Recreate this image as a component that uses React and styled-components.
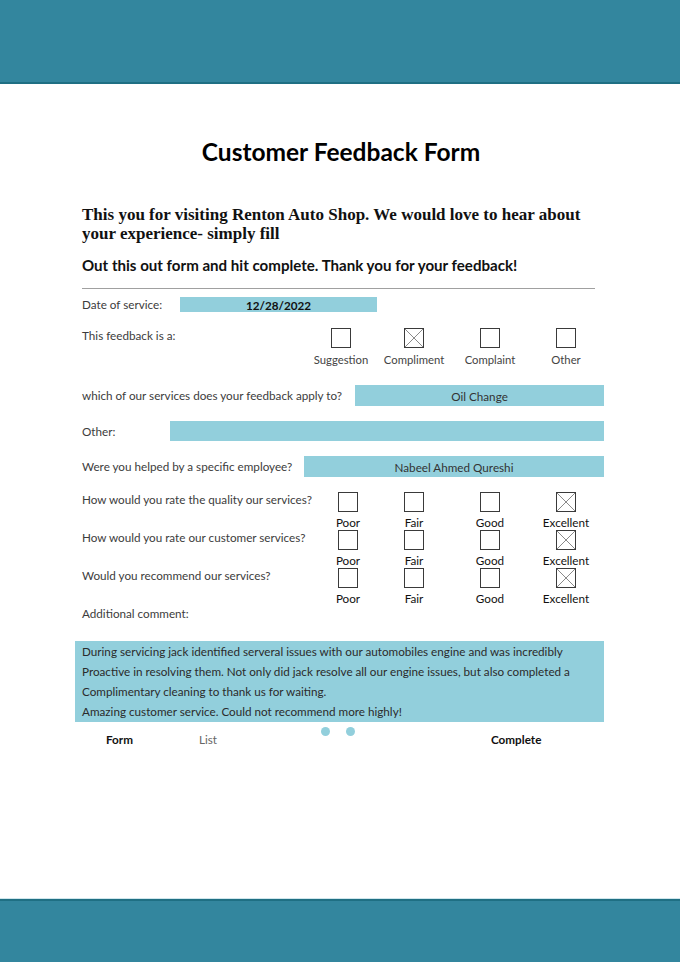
import React from "react";
import styled, { createGlobalStyle } from "styled-components";

const Global = createGlobalStyle`
  html, body { margin: 0; padding: 0; background: #ffffff; }
  body { font-family: Lato, "Open Sans", sans-serif; color: #3a3a3a; }
  * { box-sizing: border-box; }
`;

const Page = styled.div`
  min-height: 962px;
  display: flex;
  flex-direction: column;
`;

const TopBand = styled.header`
  height: 84px;
  background: #33869e;
  border-bottom: 2px solid #1f6f83;
`;

const BottomBand = styled.footer`
  height: 63px;
  background: #33869e;
  border-top: 2px solid #1f6f83;
  box-shadow: 0 -1px 0 #cfe6ec;
`;

const Main = styled.main`
  flex: 1;
  padding: 0 76px 0 82px;
  display: flex;
  flex-direction: column;
`;

const Title = styled.h1`
  margin: 53px 0 0;
  font-size: 24.5px;
  line-height: 30px;
  font-weight: 700;
  text-align: center;
  color: #000;
  padding-right: 4px;
`;

const Intro = styled.p`
  margin: 38px 0 0;
  font-family: "Liberation Serif", serif;
  font-weight: 700;
  font-size: 17px;
  line-height: 19px;
  color: #111;
`;

const Lead = styled.p`
  margin: 12px 0 0;
  font-weight: 700;
  font-size: 15.1px;
  line-height: 20px;
  color: #111;
`;

const Rule = styled.div`
  margin-top: 13px;
  width: 513px;
  border-bottom: 1px solid #a0a0a0;
`;

const Row = styled.div`
  display: flex;
  align-items: ${(p) => p.$align || "center"};
  margin-top: ${(p) => p.$mt || 0}px;
  height: ${(p) => p.$h}px;
`;

const Label = styled.span`
  font-size: 11.7px;
  line-height: 15px;
  margin-top: ${(p) => p.$mt || 0}px;
  color: #3c3c3c;
  white-space: nowrap;
  width: ${(p) => (p.$w ? `${p.$w}px` : "auto")};
  flex: none;
`;

const Field = styled.div`
  background: #92cfdc;
  height: ${(p) => p.$h}px;
  width: ${(p) => (p.$w ? `${p.$w}px` : "auto")};
  flex: ${(p) => (p.$w ? "none" : "1")};
  display: flex;
  align-items: center;
  justify-content: center;
  font-size: 11.7px;
  font-weight: ${(p) => (p.$bold ? 700 : 400)};
  color: ${(p) => (p.$bold ? "#111" : "#333")};
`;

const Checks = styled.div`
  display: grid;
  grid-template-columns: ${(p) => p.$cols};
`;

const RatingGroup = styled.div`
  margin-top: 15px;
`;

const Choice = styled.div`
  display: flex;
  flex-direction: column;
  align-items: center;
`;

const Box = styled.div`
  width: 20px;
  height: 20px;
  border: 1px solid #3a3a3a;
  background: #fff;
  svg { display: block; }
`;

const ChoiceText = styled.span`
  margin-top: ${(p) => p.$gap}px;
  font-size: ${(p) => (p.$dark ? "11.7px" : "11.3px")};
  line-height: 16px;
  color: ${(p) => (p.$dark ? "#111" : "#444")};
  white-space: nowrap;
`;

const Comment = styled.div`
  margin: 20px 0 0 -7px;
  background: #92cfdc;
  padding: 0 0 1px 7px;
  font-size: 11.7px;
  line-height: 20px;
  color: #2b2b2b;
`;

const Nav = styled.nav`
  margin-top: 9px;
  display: grid;
  grid-template-columns: 93px 122px 170px auto;
  padding-left: 24px;
  align-items: start;
  font-size: 11.7px;
  line-height: 16px;
`;

const NavItem = styled.span`
  font-weight: ${(p) => (p.$bold ? 700 : 400)};
  color: ${(p) => (p.$bold ? "#111" : "#666")};
`;

const Dots = styled.div`
  display: flex;
  gap: 16px;
  margin-top: -4px;
`;

const Dot = styled.span`
  width: 9px;
  height: 9px;
  border-radius: 50%;
  background: #92cfdc;
`;

const Check = ({ checked }) => (
  <Box>
    {checked && (
      <svg width="18" height="18" viewBox="0 0 18 18">
        <path d="M0 0L18 18M18 0L0 18" stroke="#8a8a8a" strokeWidth="1" />
      </svg>
    )}
  </Box>
);

const feedbackCols = "74px 72px 80px 72px";
const ratingCols = "88px 44px 108px 44px";

const RatingRow = ({ label }) => (
  <Row $h={38} $align="flex-start">
    <Label $w={222} $mt={-0.5}>{label}</Label>
    <Checks $cols={ratingCols}>
      {["Poor", "Fair", "Good", "Excellent"].map((t, i) => (
        <Choice key={t}>
          <Check checked={i === 3} />
          <ChoiceText $gap={2} $dark>{t}</ChoiceText>
        </Choice>
      ))}
    </Checks>
  </Row>
);

export default function App() {
  return (
    <Page>
      <Global />
      <TopBand />
      <Main>
        <Title>Customer Feedback Form</Title>
        <Intro>
          This you for visiting Renton Auto Shop. We would love to hear about
          <br />
          your experience- simply fill
        </Intro>
        <Lead>Out this out form and hit complete. Thank you for your feedback!</Lead>
        <Rule />
        <Row $mt={8} $h={15}>
          <Label $w={98}>Date of service:</Label>
          <Field $w={197} $h={15} $bold>12/28/2022</Field>
        </Row>
        <Row $mt={16} $h={41} $align="flex-start">
          <Label $w={222} $mt={-0.5}>This feedback is a:</Label>
          <Checks $cols={feedbackCols}>
            {["Suggestion", "Compliment", "Complaint", "Other"].map((t, i) => (
              <Choice key={t}>
                <Check checked={i === 1} />
                <ChoiceText $gap={4}>{t}</ChoiceText>
              </Choice>
            ))}
          </Checks>
        </Row>
        <Row $mt={16} $h={21}>
          <Label $w={273}>which of our services does your feedback apply to?</Label>
          <Field $h={21}>Oil Change</Field>
        </Row>
        <Row $mt={15} $h={20}>
          <Label $w={88}>Other:</Label>
          <Field $h={20} />
        </Row>
        <Row $mt={15} $h={21}>
          <Label $w={222}>Were you helped by a specific employee?</Label>
          <Field $h={21}>Nabeel Ahmed Qureshi</Field>
        </Row>
        <RatingGroup>
          <RatingRow label="How would you rate the quality our services?" />
          <RatingRow label="How would you rate our customer services?" />
          <RatingRow label="Would you recommend our services?" />
        </RatingGroup>
        <Label>Additional comment:</Label>
        <Comment>
          During servicing jack identified serveral issues with our automobiles engine and was incredibly
          <br />
          Proactive in resolving them. Not only did jack resolve all our engine issues, but also completed a
          <br />
          Complimentary cleaning to thank us for waiting.
          <br />
          Amazing customer service. Could not recommend more highly!
        </Comment>
        <Nav>
          <NavItem $bold>Form</NavItem>
          <NavItem>List</NavItem>
          <Dots>
            <Dot />
            <Dot />
          </Dots>
          <NavItem $bold>Complete</NavItem>
        </Nav>
      </Main>
      <BottomBand />
    </Page>
  );
}
